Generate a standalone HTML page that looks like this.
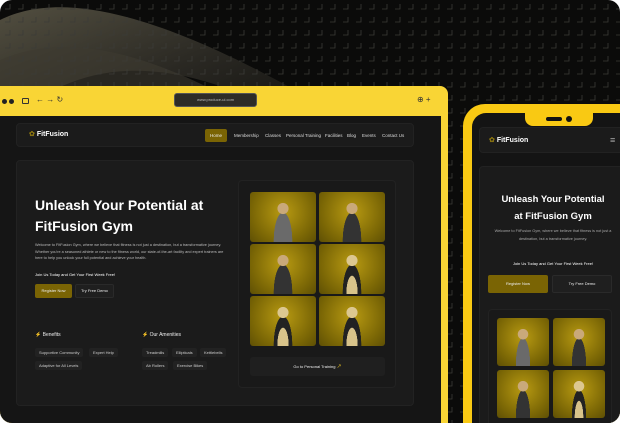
<!DOCTYPE html><html><head><style>
*{margin:0;padding:0;box-sizing:border-box}
html,body{width:620px;height:423px;overflow:hidden}
body{background:#fff;font-family:"Liberation Sans",sans-serif;color:#eee}
.root{position:absolute;left:0;top:0;width:620px;height:423px;border-radius:12px;overflow:hidden;background:#0b0b0a}
.browser{position:absolute;left:0;top:86px;width:448px;height:337px;background:#f9d535;border-radius:0 8px 0 0;overflow:hidden}
.bar{height:30px;position:relative}
.content{position:absolute;left:0;top:30px;width:441px;height:330px;background:#151515;border-radius:0 0 0 16px}
.url{position:absolute;left:174px;top:7px;width:83px;height:14px;background:#2e2c27;border-radius:3px;border:1px solid #555;font-size:4px;color:#bbb;text-align:center;line-height:12px}
.box{position:absolute;background:#1b1b1b;border-radius:4px;border:1px solid #222}
.nav a{position:absolute;font-size:4.5px;color:#ddd}
.logo{font-weight:bold;color:#fff}
.chip{position:absolute;background:#222;border-radius:2px;font-size:4px;color:#ccc;padding:0 4px;height:9px;line-height:9px}
.img{position:absolute;border-radius:3px;background:radial-gradient(circle at 50% 40%,#b89a12,#7a6605 70%,#5e4f05);overflow:hidden}
.img:after{content:"";position:absolute;left:30%;top:18%;width:40%;height:100%;background:radial-gradient(circle at 50% 15%,#c9a97a 0 12%,transparent 13%),radial-gradient(ellipse at 50% 80%,#333 0 50%,transparent 51%)}
.img.g:after{background:radial-gradient(circle at 50% 15%,#c9a97a 0 12%,transparent 13%),radial-gradient(ellipse at 50% 80%,#6a6a6a 0 50%,transparent 51%)}
.img.w:after{background:radial-gradient(circle at 50% 15%,#dcc790 0 12%,transparent 13%),radial-gradient(ellipse at 50% 80%,#d8c38a 0 30%,#222 31% 50%,transparent 51%)}
.phone{position:absolute;left:463px;top:104px;width:180px;height:340px;background:#f9c913;border-radius:22px}
.pin{position:absolute;left:9px;top:9px;width:170px;height:330px;background:#141414;border-radius:14px;overflow:hidden}
.notch{position:absolute;left:53px;top:0;width:68px;height:13px;background:#f9c913;border-radius:0 0 8px 8px}
</style></head><body><div class="root">
<svg width="620" height="423" style="position:absolute;left:0;top:0">
<defs>
<linearGradient id="sw" x1="0" y1="0" x2="1" y2="1"><stop offset="0" stop-color="#5a5646"/><stop offset="0.5" stop-color="#2d2b25"/><stop offset="1" stop-color="#0b0b0a"/></linearGradient>
<pattern id="p" width="13" height="13" patternUnits="userSpaceOnUse"><path d="M10 4v5h-5" stroke="#3a3a36" stroke-width="0.8" fill="none"/></pattern>
</defs>
<path d="M0 20 C60 -10 160 10 330 110 L330 140 C200 60 90 40 0 130 Z" fill="url(#sw)" opacity="0.9"/>
<path d="M0 60 C70 30 160 50 300 140 L0 200 Z" fill="#3e3b31" opacity="0.6"/>
<rect width="620" height="423" fill="url(#p)"/>
</svg>
<div class="browser">
 <div class="bar">
  <div style="position:absolute;left:2px;top:13px;width:5px;height:5px;border-radius:50%;background:#222"></div>
  <div style="position:absolute;left:9px;top:13px;width:5px;height:5px;border-radius:50%;background:#222"></div>
  <div style="position:absolute;left:22px;top:12px;width:7px;height:6px;border:1px solid #333;border-radius:1px"></div>
  <div style="position:absolute;left:36px;top:9px;font-size:8px;color:#333">← → ↻</div>
  <div class="url">www.produce-ui.com</div>
  <div style="position:absolute;left:417px;top:9px;font-size:8px;color:#333">⊕ +</div>
 </div>
 <div class="content">
  <div class="box nav" style="left:16px;top:7px;width:398px;height:24px">
   <div class="logo" style="position:absolute;left:12px;top:6px;font-size:7px"><span style="color:#8a7410">✿</span> FitFusion</div>
   <div style="position:absolute;left:188px;top:5px;width:22px;height:13px;background:#7a6404;border-radius:2px;font-size:4.5px;text-align:center;line-height:13px">Home</div>
   <a style="left:217px;top:9px">Membership</a><a style="left:248px;top:9px">Classes</a><a style="left:269px;top:9px">Personal Training</a><a style="left:308px;top:9px">Facilities</a><a style="left:330px;top:9px">Blog</a><a style="left:345px;top:9px">Events</a><a style="left:365px;top:9px">Contact Us</a>
  </div>
  <div class="box" style="left:16px;top:44px;width:398px;height:246px">
   <div style="position:absolute;left:18px;top:34px;font-size:14px;font-weight:bold;line-height:21px;color:#fff">Unleash Your Potential at<br>FitFusion Gym</div>
   <div style="position:absolute;left:18px;top:81px;width:190px;font-size:3.8px;line-height:6.5px;color:#bbb">Welcome to FitFusion Gym, where we believe that fitness is not just a destination, but a transformative journey. Whether you're a seasoned athlete or new to the fitness world, our state-of-the-art facility and expert trainers are here to help you unlock your full potential and achieve your health.</div>
   <div style="position:absolute;left:18px;top:111px;font-size:4px;color:#fff">Join Us Today and Get Your First Week Free!</div>
   <div style="position:absolute;left:18px;top:123px;width:37px;height:14px;background:#7a6404;border-radius:2px;font-size:4px;text-align:center;line-height:14px">Register Now</div>
   <div style="position:absolute;left:58px;top:123px;width:39px;height:14px;background:#1f1f1f;border:1px solid #2a2a2a;border-radius:2px;font-size:4px;text-align:center;line-height:12px">Try Free Demo</div>
   <div style="position:absolute;left:18px;top:171px;font-size:5px">⚡ Benefits</div>
   <div style="position:absolute;left:125px;top:171px;font-size:5px">⚡ Our Amenities</div>
   <div class="chip" style="left:18px;top:187px">Supportive Community</div>
   <div class="chip" style="left:72px;top:187px">Expert Help</div>
   <div class="chip" style="left:18px;top:200px">Adaptive for All Levels</div>
   <div class="chip" style="left:125px;top:187px">Treadmills</div><div class="chip" style="left:155px;top:187px">Ellipticals</div><div class="chip" style="left:183px;top:187px">Kettlebells</div>
   <div class="chip" style="left:125px;top:200px">Ab Rollers</div><div class="chip" style="left:156px;top:200px">Exercise Bikes</div>
   <div class="box" style="left:221px;top:19px;width:158px;height:208px;background:#191919">
    <div class="img g" style="left:11px;top:11px;width:66px;height:50px"></div>
    <div class="img" style="left:80px;top:11px;width:66px;height:50px"></div>
    <div class="img" style="left:11px;top:63px;width:66px;height:50px"></div>
    <div class="img w" style="left:80px;top:63px;width:66px;height:50px"></div>
    <div class="img w" style="left:11px;top:115px;width:66px;height:50px"></div>
    <div class="img w" style="left:80px;top:115px;width:66px;height:50px"></div>
    <div style="position:absolute;left:11px;top:176px;width:135px;height:19px;background:#1f1f1f;border-radius:3px;font-size:4px;text-align:center;line-height:19px">Go to Personal Training <span style="color:#c9a820;font-size:6px">↗</span></div>
   </div>
  </div>
 </div>
</div>
<div class="phone"><div class="pin">
 <div class="box" style="left:7px;top:14px;width:160px;height:26px">
  <div class="logo" style="position:absolute;left:9px;top:8px;font-size:7px"><span style="color:#8a7410">✿</span> FitFusion</div>
  <div style="position:absolute;left:130px;top:7px;font-size:9px;color:#aaa">≡</div>
 </div>
 <div class="box" style="left:7px;top:53px;width:160px;height:300px">
  <div style="position:absolute;left:0;width:146px;top:24px;text-align:center;font-size:9.5px;font-weight:bold;line-height:17px;color:#fff">Unleash Your Potential<br>at FitFusion Gym</div>
  <div style="position:absolute;left:8px;width:130px;top:60px;text-align:center;font-size:3.8px;line-height:8px;color:#aaa">Welcome to FitFusion Gym, where we believe that fitness is not just a destination, but a transformative journey.</div>
  <div style="position:absolute;left:0;width:146px;top:94px;text-align:center;font-size:4px;color:#fff">Join Us Today and Get Your First Week Free!</div>
  <div style="position:absolute;left:8px;top:108px;width:60px;height:18px;background:#7a6404;border-radius:2px;font-size:4px;text-align:center;line-height:18px">Register Now</div>
  <div style="position:absolute;left:72px;top:108px;width:60px;height:18px;background:#1f1f1f;border:1px solid #2a2a2a;border-radius:2px;font-size:4px;text-align:center;line-height:16px">Try Free Demo</div>
  <div class="box" style="left:8px;top:142px;width:124px;height:150px;background:#191919">
   <div class="img g" style="left:8px;top:8px;width:52px;height:48px"></div>
   <div class="img" style="left:64px;top:8px;width:52px;height:48px"></div>
   <div class="img" style="left:8px;top:60px;width:52px;height:48px"></div>
   <div class="img w" style="left:64px;top:60px;width:52px;height:48px"></div>
  </div>
 </div>
 <div class="notch"><div style="position:absolute;left:21px;top:4px;width:16px;height:4px;border-radius:2px;background:#111"></div><div style="position:absolute;left:41px;top:3px;width:6px;height:6px;border-radius:50%;background:#111"></div></div>
</div></div>
</div></body></html>
